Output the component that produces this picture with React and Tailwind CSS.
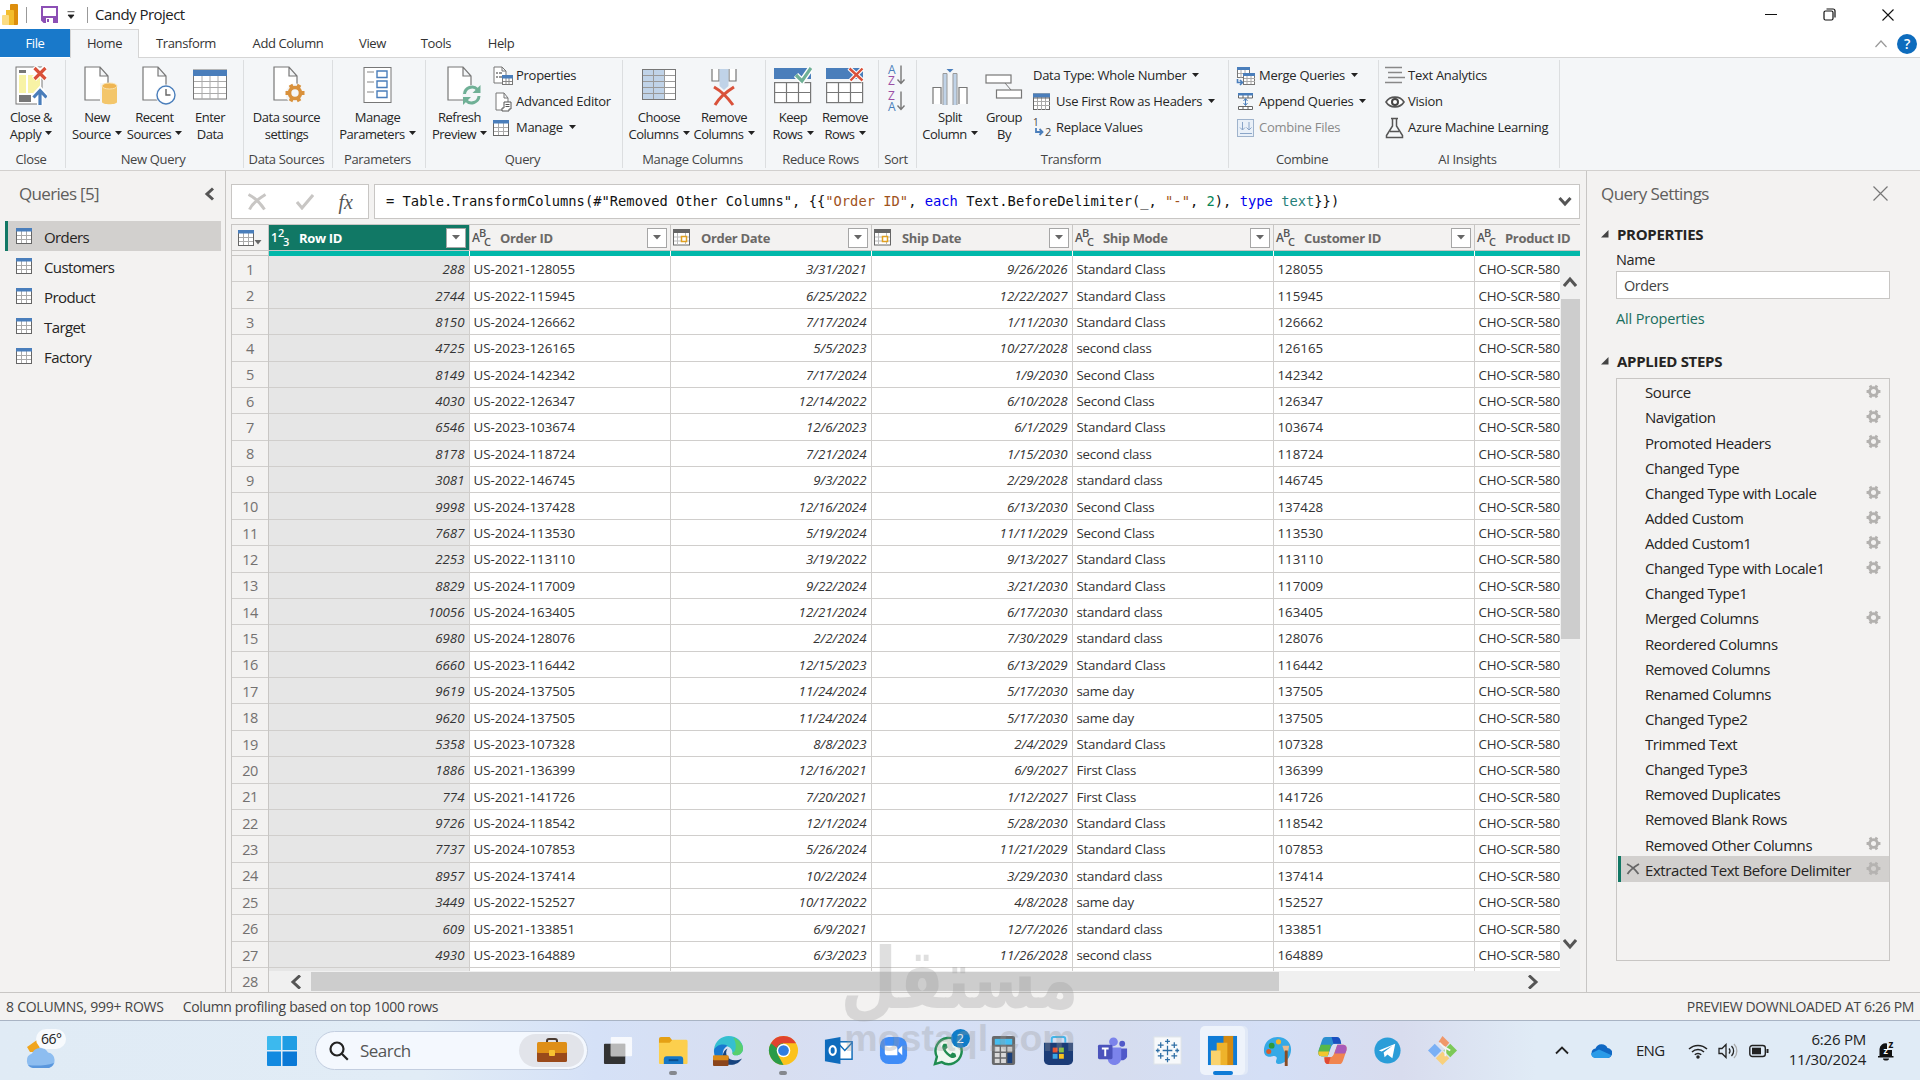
import React, { useState } from 'react';

const queries = ['Orders', 'Customers', 'Product', 'Target', 'Factory'];

const columns = [
  { key: 'rowId', label: 'Row ID', type: 'number', align: 'right' },
  { key: 'orderId', label: 'Order ID', type: 'text', align: 'left' },
  { key: 'orderDate', label: 'Order Date', type: 'date', align: 'right' },
  { key: 'shipDate', label: 'Ship Date', type: 'date', align: 'right' },
  { key: 'shipMode', label: 'Ship Mode', type: 'text', align: 'left' },
  { key: 'customerId', label: 'Customer ID', type: 'text', align: 'left' },
];

const rows = [
  ['288', 'US-2021-128055', '3/31/2021', '9/26/2026', 'Standard Class', '128055'],
  ['2744', 'US-2022-115945', '6/25/2022', '12/22/2027', 'Standard Class', '115945'],
  ['8150', 'US-2024-126662', '7/17/2024', '1/11/2030', 'Standard Class', '126662'],
  ['4725', 'US-2023-126165', '5/5/2023', '10/27/2028', 'second class', '126165'],
  ['8149', 'US-2024-142342', '7/17/2024', '1/9/2030', 'Second Class', '142342'],
  ['4030', 'US-2022-126347', '12/14/2022', '6/10/2028', 'Second Class', '126347'],
  ['6546', 'US-2023-103674', '12/6/2023', '6/1/2029', 'Standard Class', '103674'],
  ['8178', 'US-2024-118724', '7/21/2024', '1/15/2030', 'second class', '118724'],
  ['3081', 'US-2022-146745', '9/3/2022', '2/29/2028', 'standard class', '146745'],
  ['9998', 'US-2024-137428', '12/16/2024', '6/13/2030', 'Second Class', '137428'],
  ['7687', 'US-2024-113530', '5/19/2024', '11/11/2029', 'Second Class', '113530'],
  ['2253', 'US-2022-113110', '3/19/2022', '9/13/2027', 'Standard Class', '113110'],
  ['8829', 'US-2024-117009', '9/22/2024', '3/21/2030', 'Standard Class', '117009'],
  ['10056', 'US-2024-163405', '12/21/2024', '6/17/2030', 'standard class', '163405'],
  ['6980', 'US-2024-128076', '2/2/2024', '7/30/2029', 'standard class', '128076'],
  ['6660', 'US-2023-116442', '12/15/2023', '6/13/2029', 'Standard Class', '116442'],
  ['9619', 'US-2024-137505', '11/24/2024', '5/17/2030', 'same day', '137505'],
  ['9620', 'US-2024-137505', '11/24/2024', '5/17/2030', 'same day', '137505'],
  ['5358', 'US-2023-107328', '8/8/2023', '2/4/2029', 'Standard Class', '107328'],
  ['1886', 'US-2021-136399', '12/16/2021', '6/9/2027', 'First Class', '136399'],
  ['774', 'US-2021-141726', '7/20/2021', '1/12/2027', 'First Class', '141726'],
  ['9726', 'US-2024-118542', '12/1/2024', '5/28/2030', 'Standard Class', '118542'],
  ['7737', 'US-2024-107853', '5/26/2024', '11/21/2029', 'Standard Class', '107853'],
  ['8957', 'US-2024-137414', '10/2/2024', '3/29/2030', 'standard class', '137414'],
  ['3449', 'US-2022-152527', '10/17/2022', '4/8/2028', 'same day', '152527'],
  ['609', 'US-2021-133851', '6/9/2021', '12/7/2026', 'standard class', '133851'],
  ['4930', 'US-2023-164889', '6/3/2023', '11/26/2028', 'second class', '164889'],
];

const steps = [
  { name: 'Source', gear: true },
  { name: 'Navigation', gear: true },
  { name: 'Promoted Headers', gear: true },
  { name: 'Changed Type' },
  { name: 'Changed Type with Locale', gear: true },
  { name: 'Added Custom', gear: true },
  { name: 'Added Custom1', gear: true },
  { name: 'Changed Type with Locale1', gear: true },
  { name: 'Changed Type1' },
  { name: 'Merged Columns', gear: true },
  { name: 'Reordered Columns' },
  { name: 'Removed Columns' },
  { name: 'Renamed Columns' },
  { name: 'Changed Type2' },
  { name: 'Trimmed Text' },
  { name: 'Changed Type3' },
  { name: 'Removed Duplicates' },
  { name: 'Removed Blank Rows' },
  { name: 'Removed Other Columns', gear: true },
  { name: 'Extracted Text Before Delimiter', gear: true },
];

/* ---------- small shared drawings ---------- */

const Caret = ({ className = 'ml-1' }) => (
  <svg width="7" height="4" viewBox="0 0 7 4" className={`inline-block shrink-0 ${className}`}>
    <path d="M0 0h7L3.5 4z" fill="#222" />
  </svg>
);

const Chevron = ({ d, size = 14, color = '#555', width = 3 }) => (
  <svg width={size} height={size} viewBox="0 0 14 14" fill="none" stroke={color} strokeWidth={width}>
    <path d={d} />
  </svg>
);

const Gear = ({ color, size = 15 }) => (
  <svg width={size} height={size} viewBox="0 0 16 16">
    <circle cx="8" cy="8" r="4.2" fill="none" stroke={color} strokeWidth="3" />
    <g stroke={color} strokeWidth="3">
      <path d="M0.6 8h3M12.4 8h3M4.3 1.6l1.5 2.6M10.2 11.8l1.5 2.6M11.7 1.6l-1.5 2.6M5.8 11.8l-1.5 2.6" />
    </g>
  </svg>
);

const TableIcon = () => (
  <svg width="16" height="16" viewBox="0 0 16 16" className="shrink-0">
    <rect x="0.5" y="0.5" width="15" height="15" fill="#fff" stroke="#666" />
    <path d="M5.5 3v12M10.5 3v12M1 7.5h14M1 11.5h14" stroke="#aaa" fill="none" />
    <rect width="16" height="3.5" fill="#4a7ebb" />
  </svg>
);

const PagePath = () => (
  <path d="M1 1h15l8 9v24H1z M16 1v9h8" fill="#fff" stroke="#777" strokeWidth="1.2" />
);

/* ---------- ribbon icons ---------- */

const CloseApplyIcon = () => (
  <svg width="32" height="40" viewBox="0 0 32 40">
    <rect x="1" y="1" width="26" height="37" fill="#fff" stroke="#777" />
    <rect x="4" y="4" width="7" height="3" fill="#777" />
    <rect x="4" y="9" width="7" height="18" fill="#f8f3a5" />
    <rect x="13" y="9" width="12" height="18" fill="#f8f3a5" />
    <rect x="4" y="29" width="12" height="7" fill="#777" />
    <path d="M19 1l12 12M31 1L19 13" stroke="#fff" strokeWidth="6" />
    <path d="M19.500 2l11 11M30.500 2l-11 11" stroke="#d9513a" strokeWidth="3.200" />
    <path d="M25 39V24M18.500 31l6.500-7 6.500 7" stroke="#fff" strokeWidth="6" fill="none" />
    <path d="M25 39V25M18.500 31.500l6.500-7 6.500 7" stroke="#4a7ebb" strokeWidth="3.200" fill="none" />
  </svg>
);

const NewSourceIcon = () => (
  <svg width="34" height="40" viewBox="0 0 34 40" className="ml-[8px]">
    <PagePath />
    <path d="M16 17h17v21H16z" fill="#f4f6f8" />
    <path d="M18 20v16c0 3 15 3 15 0V20z" fill="#f3c66b" />
    <ellipse cx="25.500" cy="20" rx="7.500" ry="3" fill="#efb552" stroke="#f9e2ad" />
  </svg>
);

const RecentSourcesIcon = () => (
  <svg width="34" height="40" viewBox="0 0 34 40" className="ml-[8px]">
    <PagePath />
    <circle cx="24" cy="29" r="10.500" fill="#f4f6f8" />
    <circle cx="24" cy="29" r="9" fill="#fff" stroke="#4a7ebb" strokeWidth="1.400" />
    <path d="M24 23v6h4.500" stroke="#666" fill="none" strokeWidth="1.400" />
  </svg>
);

const EnterDataIcon = () => (
  <svg width="34" height="40" viewBox="0 0 34 40">
    <rect x="0.500" y="4" width="33" height="29" fill="#fff" stroke="#777" />
    <path d="M9 10v23M17 10v23M25 10v23M1 15.500h32M1 21.500h32M1 27.500h32" stroke="#aaa" />
    <rect y="4" width="34" height="6" fill="#4a7ebb" />
  </svg>
);

const DataSourceIcon = () => (
  <svg width="34" height="40" viewBox="0 0 34 40" className="ml-[7px]">
    <PagePath />
    <circle cx="23" cy="28" r="10.500" fill="#f4f6f8" />
    <g fill="none" stroke="#d9913c">
      <circle cx="22" cy="27" r="5.500" strokeWidth="3.600" />
      <path
        strokeWidth="4"
        d="M12.500 27h4M27.500 27h4M17.500 18.800l1.800 3.200M24.700 32l1.800 3.200M26.500 18.800l-1.800 3.200M19.300 32l-1.800 3.200"
      />
    </g>
  </svg>
);

const ParametersIcon = () => (
  <svg width="30" height="40" viewBox="0 0 30 40">
    <rect x="1" y="1.500" width="27" height="35" fill="#fff" stroke="#777" />
    <path d="M4 6h7M4 16h7M4 26h7" stroke="#888" strokeWidth="1.200" />
    <g fill="none" stroke="#4a7ebb" strokeWidth="1.400">
      <path d="M14 5h10v6.500H14zM14 15h10v6.500H14zM14 25h10v6.500H14z" />
    </g>
  </svg>
);

const RefreshIcon = () => (
  <svg width="34" height="40" viewBox="0 0 34 40" className="ml-[8px]">
    <PagePath />
    <circle cx="25" cy="29" r="10" fill="#f4f6f8" />
    <g fill="none" stroke="#6fb096" strokeWidth="3">
      <path d="M17.500 28a7.500 7.500 0 0 1 13-4.500M32 30a7.500 7.500 0 0 1-13 4.500" />
    </g>
    <path d="M33.500 19v8h-8zM16 39v-8h8z" fill="#6fb096" />
  </svg>
);

const ChooseColumnsIcon = () => (
  <svg width="34" height="40" viewBox="0 0 34 40">
    <rect x="0.500" y="3.500" width="33" height="30" fill="#fff" stroke="#777" />
    <rect x="1" y="4" width="21" height="29" fill="#c0d3e8" />
    <path d="M11.500 4v29M22.500 4v29M1 9.500h32M1 15.500h32M1 21.500h32M1 27.500h32" stroke="#999" />
  </svg>
);

const RemoveColumnsIcon = () => (
  <svg width="30" height="40" viewBox="0 0 30 40">
    <path d="M3 3v12h7V3M20 3v12h7V3" fill="#fff" stroke="#777" strokeWidth="1.200" />
    <path d="M10.500 3h9v17l-4.500 4-4.500-4z" fill="#c0d3e8" />
    <path d="M5 21c7 4 14 11 19 18M25 21C17 26 10 32 6 39" stroke="#d9513a" strokeWidth="3" fill="none" />
  </svg>
);

const RowsIcon = ({ remove }) => (
  <svg width="38" height="40" viewBox="0 0 38 40">
    <rect x="0" y="2" width="37" height="11" fill="#4a7ebb" />
    <rect x="0.600" y="16.600" width="36" height="20" fill="#fff" stroke="#777" strokeWidth="1.200" />
    <path d="M12.500 17v20M24.500 17v20M1 26.500h36" stroke="#777" strokeWidth="1.200" />
    {remove ? (
      <>
        <path d="M23 2l14 13M37 2L24 15" stroke="#fff" strokeWidth="4.500" />
        <path d="M23.500 2.500l13 12M36.500 2.500l-12 12" stroke="#d9513a" strokeWidth="2.400" />
      </>
    ) : (
      <>
        <path d="M22 9l6 6 9-13" stroke="#fff" strokeWidth="6" fill="none" />
        <path d="M22 9l6 6 9-13" stroke="#6fb096" strokeWidth="3.200" fill="none" />
      </>
    )}
  </svg>
);

const SortIcon = ({ top, bottom, topColor, bottomColor }) => (
  <svg width="18" height="20" viewBox="0 0 18 20" className="overflow-visible font-['Open_Sans',sans-serif]">
    <text x="1" y="9" fontSize="12" fontWeight="500" fill={topColor}>{top}</text>
    <text x="1" y="20" fontSize="12" fontWeight="500" fill={bottomColor}>{bottom}</text>
    <path d="M14 0.500v17.500M10.500 14.500l3.500 4 3.500-4" stroke="#777" strokeWidth="1.400" fill="none" />
  </svg>
);

const SplitIcon = () => (
  <svg width="36" height="40" viewBox="0 0 36 40">
    <path d="M1 38V21.500h8V38M27 38V21.500h8V38" fill="#fff" stroke="#777" strokeWidth="1.200" />
    <path d="M11 39V7.500h4V39M21 39V7.500h4V39" fill="#c0d3e8" stroke="#999" />
    <path d="M14.500 3h7L18 6.500z" fill="#4a7ebb" />
  </svg>
);

const GroupByIcon = () => (
  <svg width="38" height="40" viewBox="0 0 38 40">
    <rect x="1" y="9" width="25" height="8" fill="#fff" stroke="#777" strokeWidth="1.200" />
    <rect x="11.500" y="24" width="25" height="8" fill="#fff" stroke="#777" strokeWidth="1.200" />
    <path d="M20 17l6 7" stroke="#777" />
  </svg>
);

const PropertiesIcon = () => (
  <svg width="20" height="20" viewBox="0 0 20 20">
    <path d="M1 1h8l4 4v12H1z M9 1v4h4" fill="#fff" stroke="#777" />
    <path d="M3 7h2M3 11h2M6 7h3M6 11h3" stroke="#777" strokeWidth="1.500" />
    <rect x="9.500" y="10.500" width="10" height="8" fill="#fff" stroke="#777" />
    <path d="M13 12v6M16 12v6M10 15.500h9" stroke="#888" />
    <rect x="9" y="9" width="11" height="3.500" fill="#4a7ebb" />
  </svg>
);

const EditorIcon = () => (
  <svg width="20" height="20" viewBox="0 0 20 20">
    <path d="M3 1h8l4 5v12H3z M11 1v5h4" fill="#fff" stroke="#777" />
    <path d="M11 10h7v7h-2v2H9v-3h2z" fill="#fff" stroke="#555" />
    <path d="M12.500 12.500h4M12.500 14.500h4" stroke="#555" />
  </svg>
);

const HeadersIcon = () => (
  <svg width="18" height="18" viewBox="0 0 18 18">
    <rect x="0.500" y="1" width="16" height="15.500" fill="#fff" stroke="#666" />
    <path d="M4.500 2v15M8.500 2v15M12.500 2v15M1 8.500h16M1 12.500h16" stroke="#aaa" />
    <rect x="0" y="0.500" width="17" height="4" fill="#4a7ebb" />
    <path d="M1 5h15.500" stroke="#666" />
  </svg>
);

const ReplaceIcon = () => (
  <svg width="20" height="20" viewBox="0 0 20 20" className="overflow-visible font-['Open_Sans',sans-serif]">
    <text x="0" y="8" fontSize="10" fill="#444">1</text>
    <text x="12" y="18" fontSize="11" fill="#444">2</text>
    <path d="M3 10v4h6M6.500 11l3 3-3 3" stroke="#4a7ebb" strokeWidth="1.800" fill="none" />
  </svg>
);

const MergeIcon = () => (
  <svg width="20" height="20" viewBox="0 0 20 20">
    <rect x="1.500" y="1.500" width="12" height="10" fill="#fff" stroke="#777" />
    <path d="M5 4v8M9 4v8M2 7.500h11" stroke="#aaa" />
    <rect x="1" y="1" width="13" height="3" fill="#4a7ebb" />
    <rect x="7.500" y="7.500" width="11" height="11" fill="#fff" stroke="#777" />
    <path d="M11 10v8M15 10v8M8 12.500h11M8 15.500h11" stroke="#aaa" />
    <rect x="7" y="7" width="12" height="3" fill="#4a7ebb" />
    <path d="M1.500 13v3.500h5M4 14l2.500 2.500L4 19" stroke="#4a7ebb" strokeWidth="1.600" fill="none" />
  </svg>
);

const AppendIcon = () => (
  <svg width="20" height="20" viewBox="0 0 20 20">
    <path d="M2.500 2h14v4h-14zM2.500 14.500h14v3h-14zM7 3v3M12 3v3M7 15v3M12 15v3" fill="#fff" stroke="#666" />
    <rect x="2" y="1" width="15" height="2.500" fill="#4a7ebb" />
    <path d="M9.500 7v6M7.500 9l2-2.500 2 2.500M7.500 11l2 2.500 2-2.500" stroke="#4a7ebb" fill="none" />
  </svg>
);

const CombineIcon = () => (
  <svg width="20" height="20" viewBox="0 0 20 20">
    <rect x="1.500" y="1.500" width="16" height="17" fill="#e9f0f8" stroke="#9fb3cc" />
    <path d="M6.500 4v8M4 9.500L6.500 12 9 9.500M13 4v8M10.500 9.500L13 12l2.500-2.500M4 15.500h12" stroke="#8aa5c8" fill="none" />
  </svg>
);

const TextAnalyticsIcon = () => (
  <svg width="20" height="20" viewBox="0 0 20 20">
    <path d="M0 1.500h17M3 6.500h14M3 11.500h17M0 16.500h17" stroke="#888" strokeWidth="1.500" />
  </svg>
);

const VisionIcon = () => (
  <svg width="20" height="14" viewBox="0 0 20 14">
    <path d="M1 7c4-6.500 14-6.500 18 0-4 6.500-14 6.500-18 0z" fill="#fff" stroke="#555" strokeWidth="1.600" />
    <circle cx="10" cy="7" r="3" fill="none" stroke="#444" strokeWidth="2" />
  </svg>
);

const FlaskIcon = () => (
  <svg width="20" height="22" viewBox="0 0 20 22">
    <path d="M6 1.500h7M7.500 1.500V9L1.500 18.500V20.500h16V18.500L11.500 9V1.500M5 14.500h9" fill="none" stroke="#555" strokeWidth="1.500" />
  </svg>
);

/* ---------- ribbon ---------- */

const BigButton = ({ icon, lines, caret, width }) => (
  <div className={`flex shrink-0 flex-col items-center pt-[6px] text-center ${width}`}>
    <div className="flex h-[44px] items-start">{icon}</div>
    <div className="-mt-px whitespace-nowrap leading-[17px] tracking-[-0.038em]">
      <div>{lines[0]}</div>
      <div className="flex items-center justify-center">
        {lines[1]}
        {caret && <Caret className="ml-[4px] -mt-[3px]" />}
      </div>
    </div>
  </div>
);

const SmallButton = ({ icon, label, caret, disabled }) => (
  <div className={`flex h-[26px] items-center whitespace-nowrap tracking-[-0.021em] ${disabled ? 'text-[#8a8a8a]' : ''}`}>
    {icon && <span className="mr-[3px] flex w-5 shrink-0 justify-start">{icon}</span>}
    {label}
    {caret && <Caret className="ml-[6px] -mt-[3px]" />}
  </div>
);

const Group = ({ label, width, children, className = '' }) => (
  <div className={`my-[2px] flex shrink-0 flex-col border-r border-[#dcdee0] pr-[3px] ${width}`}>
    <div className={`flex h-[91px] ${className}`}>{children}</div>
    <div className="whitespace-nowrap text-center leading-[17px] text-[#444]">{label}</div>
  </div>
);

const Ribbon = () => (
  <div className="flex h-[113px] border-b border-[#d2d0ce] bg-[#f4f6f8] text-[13px] tracking-[-0.026em] text-[#262626]">
    <Group label="Close" width="w-[66px]" className="justify-center">
      <BigButton icon={<CloseApplyIcon />} lines={['Close &', 'Apply']} caret width="w-[62px]" />
    </Group>
    <Group label="New Query" width="w-[178px]" className="pl-[2px]">
      <BigButton icon={<NewSourceIcon />} lines={['New', 'Source']} caret width="w-[58px]" />
      <BigButton icon={<RecentSourcesIcon />} lines={['Recent', 'Sources']} caret width="w-[57px]" />
      <BigButton icon={<EnterDataIcon />} lines={['Enter', 'Data']} width="w-[54px]" />
    </Group>
    <Group label="Data Sources" width="w-[89px]" className="justify-center">
      <BigButton icon={<DataSourceIcon />} lines={['Data source', 'settings']} width="w-[84px]" />
    </Group>
    <Group label="Parameters" width="w-[93px]" className="justify-center">
      <BigButton icon={<ParametersIcon />} lines={['Manage', 'Parameters']} caret width="w-[88px]" />
    </Group>
    <Group label="Query" width="w-[197px]">
      <BigButton icon={<RefreshIcon />} lines={['Refresh', 'Preview']} caret width="w-[67px]" />
      <div className="pt-[3px]">
        <SmallButton icon={<PropertiesIcon />} label="Properties" />
        <SmallButton icon={<EditorIcon />} label="Advanced Editor" />
        <SmallButton icon={<TableIcon />} label="Manage" caret />
      </div>
    </Group>
    <Group label="Manage Columns" width="w-[143px]" className="pl-[4px]">
      <BigButton icon={<ChooseColumnsIcon />} lines={['Choose', 'Columns']} caret width="w-[64px]" />
      <BigButton icon={<RemoveColumnsIcon />} lines={['Remove', 'Columns']} caret width="w-[66px]" />
    </Group>
    <Group label="Reduce Rows" width="w-[113px]" className="pl-[1px]">
      <BigButton icon={<RowsIcon />} lines={['Keep', 'Rows']} caret width="w-[52px]" />
      <BigButton icon={<RowsIcon remove />} lines={['Remove', 'Rows']} caret width="w-[52px]" />
    </Group>
    <Group label="Sort" width="w-[38px]" className="flex-col items-center gap-[6px] pt-[5px]">
      <SortIcon top="A" bottom="Z" topColor="#4a7ebb" bottomColor="#9b4fa5" />
      <SortIcon top="Z" bottom="A" topColor="#9b4fa5" bottomColor="#4a7ebb" />
    </Group>
    <Group label="Transform" width="w-[312px]">
      <BigButton icon={<SplitIcon />} lines={['Split', 'Column']} caret width="w-[66px]" />
      <BigButton icon={<GroupByIcon />} lines={['Group', 'By']} width="w-[42px]" />
      <div className="pl-[8px] pt-[3px]">
        <SmallButton label="Data Type: Whole Number" caret />
        <SmallButton icon={<HeadersIcon />} label="Use First Row as Headers" caret />
        <SmallButton icon={<ReplaceIcon />} label="Replace Values" />
      </div>
    </Group>
    <Group label="Combine" width="w-[150px]" className="pl-[7px] pt-[3px]">
      <div>
        <SmallButton icon={<MergeIcon />} label="Merge Queries" caret />
        <SmallButton icon={<AppendIcon />} label="Append Queries" caret />
        <SmallButton icon={<CombineIcon />} label="Combine Files" disabled />
      </div>
    </Group>
    <Group label="AI Insights" width="w-[181px]" className="pl-[6px] pt-[3px]">
      <div>
        <SmallButton icon={<TextAnalyticsIcon />} label="Text Analytics" />
        <SmallButton icon={<VisionIcon />} label="Vision" />
        <SmallButton icon={<FlaskIcon />} label="Azure Machine Learning" />
      </div>
    </Group>
  </div>
);

/* ---------- window chrome ---------- */

const PowerBiLogo = () => (
  <svg width="16" height="21" viewBox="0 0 16 21">
    <rect x="8" y="0" width="8" height="21" rx="1" fill="#dd8e0c" />
    <path d="M4 6h7a1 1 0 0 1 1 1v14H4z" fill="#f3bd2d" />
    <path d="M0 12a1 1 0 0 1 1-1h5a1 1 0 0 1 1 1v9H1a1 1 0 0 1-1-1z" fill="#fbdc82" />
  </svg>
);

const TitleBar = () => (
  <div className="flex h-[29px] items-center justify-between bg-white">
    <div className="flex items-center pl-[2px]">
      <PowerBiLogo />
      <div className="ml-[8px] h-[16px] w-px bg-[#999]" />
      <svg width="17" height="17" viewBox="0 0 17 17" className="ml-[14px]">
        <path d="M1 1h15v15H3l-2-2z" fill="#fff" stroke="#8c4fb5" strokeWidth="2" />
        <path d="M1 10h15v6H3l-2-2z" fill="#8c4fb5" />
        <rect x="5" y="12" width="7" height="5" fill="#fff" />
        <rect x="6" y="13" width="2" height="3" fill="#8c4fb5" />
      </svg>
      <svg width="8" height="8" viewBox="0 0 8 8" className="ml-[9px]">
        <path d="M0.500 0.700h7M1 4h6L4 7.500z" fill="#222" stroke="#222" strokeWidth="0.800" />
      </svg>
      <div className="ml-[12px] h-[16px] w-px bg-[#999]" />
      <span className="-mt-px ml-[7px] text-[15px] leading-[20px] tracking-[-0.035em] text-[#222]">Candy Project</span>
    </div>
    <div className="flex items-center gap-[46px] pr-[26px]">
      <svg width="12" height="12" viewBox="0 0 12 12"><path d="M0 5.500h12" stroke="#111" /></svg>
      <svg width="13" height="13" viewBox="0 0 13 13" fill="none" stroke="#111" strokeWidth="1.200">
        <rect x="1" y="3" width="9" height="9" rx="1.500" />
        <path d="M3.500 1h6.500a2 2 0 0 1 2 2v6.500" />
      </svg>
      <svg width="12" height="12" viewBox="0 0 12 12"><path d="M0.500 0.500l11 11M11.500 0.500l-11 11" stroke="#111" strokeWidth="1.100" /></svg>
    </div>
  </div>
);

const Tabs = () => {
  const tabs = [
    ['Transform', 'w-[94px]'],
    ['Add Column', 'w-[110px]'],
    ['View', 'w-[59px]'],
    ['Tools', 'w-[68px]'],
    ['Help', 'w-[62px]'],
  ];
  return (
    <div className="flex h-[29px] bg-white text-[13px] tracking-[-0.03em] text-[#333]">
      <div className="flex h-[28px] w-[70px] items-center justify-center bg-[#1979ca] pt-px text-white">File</div>
      <div className="flex w-[69px] items-center justify-center border-x border-t border-[#d5d5d5] bg-[#f4f6f8]">Home</div>
      <div className="flex flex-1 items-center border-b border-[#d5d5d5] pt-[2px]">
        {tabs.map(([name, width]) => (
          <div key={name} className={`text-center ${width}`}>{name}</div>
        ))}
        <div className="ml-auto flex items-center pr-[3px]">
          <svg width="12" height="8" viewBox="0 0 12 8" className="mr-[10px]">
            <path d="M0.500 7L6 1l5.500 6" fill="none" stroke="#999" strokeWidth="1.200" />
          </svg>
          <div className="-mt-px flex h-[20px] w-[20px] items-center justify-center rounded-full bg-[#0e6cbd] text-[14px] font-semibold text-white">?</div>
        </div>
      </div>
    </div>
  );
};

/* ---------- left pane ---------- */

const QueriesPane = ({ selected, onSelect }) => (
  <div className="flex w-[226px] shrink-0 flex-col border-r border-[#c8c6c4]">
    <div className="flex h-[45px] items-center justify-between pl-[19px] pr-[8px]">
      <span className="text-[17px] tracking-[-0.04em] text-[#605e5c]">Queries [5]</span>
      <Chevron d="M10 1.500L4 7l6 5.500" />
    </div>
    <div className="mt-[5px]">
      {queries.map((name) => (
        <div
          key={name}
          onClick={() => onSelect(name)}
          className={`ml-[5px] mr-[4px] flex h-[30px] items-center border-l-[3px] pl-[8px] text-[15px] tracking-[-0.04em] text-[#252423] ${
            selected === name ? 'border-[#117865] bg-[#d2d0ce]' : 'border-transparent'
          }`}
        >
          <TableIcon />
          <span className="ml-[12px] mt-[2px]">{name}</span>
        </div>
      ))}
    </div>
  </div>
);

/* ---------- grid ---------- */

const TypeIcon = ({ type, active }) => {
  const color = active ? '#fff' : '#555';
  if (type === 'date') {
    return (
      <svg width="18" height="17" viewBox="0 0 18 17" className="shrink-0">
        <rect x="0.500" y="0.500" width="16" height="15.500" fill="#fff" stroke="#666" />
        <path d="M4.500 4v12M12.500 4v12M1 8h15M1 12h15" stroke="#bbb" />
        <rect x="0" y="0" width="17" height="4" fill="#666" />
        <rect x="8.500" y="7.500" width="5" height="5" fill="#fff" stroke="#e0a020" strokeWidth="1.500" />
      </svg>
    );
  }
  const [a, b, c] = type === 'number' ? ['1', '2', '3'] : ['A', 'B', 'C'];
  return (
    <svg width="20" height="20" viewBox="0 0 20 20" fill={color} className="shrink-0 overflow-visible font-['Open_Sans',sans-serif]">
      <text x="0" y="14" fontSize="12" fontWeight="600">{a}</text>
      <text x="7" y="9" fontSize="11" fontWeight="600">{b}</text>
      <text x="12" y="18" fontSize="11" fontWeight="600">{c}</text>
    </svg>
  );
};

const HeaderCell = ({ col, active }) => (
  <div
    className={`flex h-[25px] w-[201px] shrink-0 items-center border-r border-[#c8c6c4] pl-[2px] ${
      active ? 'bg-[#117865] text-white' : 'bg-[#f3f2f1] text-[#6b6967]'
    }`}
  >
    <div className="w-[28px] shrink-0"><TypeIcon type={col.type} active={active} /></div>
    <span className="mt-[2px] whitespace-nowrap font-bold tracking-[-0.025em]">{col.label}</span>
    <div className="ml-auto mr-[3px] flex h-[20px] w-[20px] items-center justify-center border border-[#a6a6a6] bg-white">
      <svg width="8" height="5" viewBox="0 0 8 5"><path d="M0 0h8L4 4.500z" fill="#666" /></svg>
    </div>
  </div>
);

const FormulaBar = () => (
  <div className="flex h-[35px] gap-[5px]">
    <div className="flex w-[138px] items-center justify-between border border-[#c8c6c4] bg-white pl-[15px] pr-[15px]">
      <svg width="20" height="18" viewBox="0 0 20 18">
        <path d="M1.500 1.500c6 3 12 9 16 15M18.500 1.500C11 6 5 11 2.500 16.500" stroke="#c8c6c4" strokeWidth="3" fill="none" />
      </svg>
      <svg width="18" height="16" viewBox="0 0 18 16" className="ml-[4px]">
        <path d="M1 8l5 6L17 1" stroke="#c8c6c4" strokeWidth="3" fill="none" />
      </svg>
      <span className="font-['Liberation_Serif',serif] text-[20px] italic leading-none text-[#555]">fx</span>
    </div>
    <div className="flex flex-1 items-center justify-between border border-[#c8c6c4] bg-white pl-[11px] pr-[7px]">
      <code className="whitespace-pre font-['DejaVu_Sans_Mono',monospace] text-[13.77px] text-[#111]">
        {'= Table.TransformColumns(#"Removed Other Columns", {{'}
        <span className="text-[#a0521c]">"Order ID"</span>
        {', '}
        <span className="text-[#0000ee]">each</span>
        {' Text.BeforeDelimiter(_, '}
        <span className="text-[#a0521c]">"-"</span>
        {', '}
        <span className="text-[#098658]">2</span>
        {'), '}
        <span className="text-[#0000ee]">type</span> <span className="text-[#267f79]">text</span>
        {'}})'}
      </code>
      <Chevron d="M1.500 3L7 9l5.500-6" />
    </div>
  </div>
);

const Grid = () => (
  <div className="mt-[5px] flex min-h-0 flex-1 flex-col border-l border-t border-[#c8c6c4] text-[13px]">
    {/* Column headers */}
    <div className="flex h-[25px] shrink-0 overflow-hidden">
      <div className="flex w-[37px] shrink-0 items-center border-r border-[#c8c6c4] pl-[6px]">
        <TableIcon />
        <svg width="8" height="5" viewBox="0 0 8 5" className="mt-[9px]"><path d="M0.500 0h7L4 4.500z" fill="#666" /></svg>
      </div>
      {columns.map((col, i) => (
        <HeaderCell key={col.key} col={col} active={i === 0} />
      ))}
      <HeaderCell col={{ label: 'Product ID', type: 'text' }} />
    </div>
    {/* Column quality bar */}
    <div className="flex h-[6px] shrink-0 overflow-hidden border-t border-[#c8c6c4]">
      <div className="w-[37px] shrink-0 border-b border-r border-[#c8c6c4]" />
      {[0, 1, 2, 3, 4, 5, 6].map((i) => (
        <div key={i} className="w-[201px] shrink-0 border-r border-white bg-[#01b8aa]" />
      ))}
    </div>
    <div className="flex min-h-0 flex-1">
      {/* Row numbers */}
      <div className="w-[37px] shrink-0 overflow-hidden border-r border-[#c8c6c4] text-[14.5px] tracking-[-0.03em] text-[#737170]">
        {[...rows, null].map((_, i) => (
          <div key={i} className="flex h-[26.385px] items-center justify-center border-b border-[#d0cecc] pt-[2px]">
            {i + 1}
          </div>
        ))}
      </div>
      <div className="flex min-w-0 flex-1 flex-col">
        <div className="flex min-h-0 flex-1">
          <div className="min-w-0 flex-1 overflow-hidden bg-white text-[13.3px] text-[#333]">
            {[...rows, ['', '', '', '', '', '', '']].map((row, i) => (
              <div key={i} className="flex h-[26.385px]">
                {columns.map((col, c) => (
                  <div
                    key={col.key}
                    className={`flex w-[201px] shrink-0 items-center whitespace-nowrap border-b border-r border-[#d0cecc] pl-[3.5px] pr-[4.5px] pt-[3px] ${
                      col.align === 'right' ? 'justify-end italic' : ''
                    } ${col.key === 'shipMode' ? 'tracking-[-0.017em]' : ''} ${c === 0 ? 'bg-[#e6e6e6]' : ''}`}
                  >
                    {row[c]}
                  </div>
                ))}
                <div className="flex w-[201px] shrink-0 items-center whitespace-nowrap border-b border-[#d0cecc] pl-[3.5px] pt-[3px] tracking-[-0.017em]">
                  {i < rows.length ? 'CHO-SCR-58000' : ''}
                </div>
              </div>
            ))}
          </div>
          {/* Vertical scrollbar */}
          <div className="flex w-[20px] shrink-0 flex-col items-center bg-[#f0f0f0] pt-[20px]">
            <Chevron d="M1 10l6-7 6 7" />
            <div className="mt-[9px] h-[340px] w-[19px] bg-[#cdcdcd]" />
            <div className="mt-auto mb-[21px]"><Chevron d="M1 4l6 7 6-7" /></div>
          </div>
        </div>
        {/* Horizontal scrollbar */}
        <div className="flex h-[21px] items-center bg-[#f0f0f0] pl-[20px] pr-[40px]">
          <Chevron d="M11 0.500L4 7l7 6.500" />
          <div className="ml-[8px] h-[19px] w-[968px] bg-[#cdcdcd]" />
          <div className="ml-auto"><Chevron d="M3 0.500L10 7l-7 6.500" /></div>
        </div>
      </div>
    </div>
  </div>
);

/* ---------- right pane ---------- */

const SectionTitle = ({ children }) => (
  <div className="flex items-center">
    <svg width="8" height="8" viewBox="0 0 8 8"><path d="M7.500 0v7.500H0z" fill="#444" /></svg>
    <span className="ml-[8px] text-[15px] font-bold leading-[20px] tracking-[-0.02em] text-[#252423]">{children}</span>
  </div>
);

const SettingsPane = ({ name }) => (
  <div className="flex w-[334px] shrink-0 flex-col border-l border-[#c8c6c4] pl-[14px] text-[15px] tracking-[-0.028em] text-[#252423]">
    <div className="flex h-[45px] items-center justify-between pr-[32px]">
      <span className="text-[17px] tracking-[-0.035em] text-[#605e5c]">Query Settings</span>
      <svg width="15" height="15" viewBox="0 0 15 15"><path d="M0.500 0.500l14 14M14.500 0.500l-14 14" stroke="#777" strokeWidth="1.200" /></svg>
    </div>
    <div className="mt-[8px]"><SectionTitle>PROPERTIES</SectionTitle></div>
    <div className="ml-[15px] mt-[6px] text-[14.5px] leading-[20px]">Name</div>
    <div className="ml-[15px] mr-[30px] mt-[1px] flex h-[28px] items-center border border-[#c8c6c4] bg-white px-[7px] pt-[2px] text-[14.5px] text-[#444]">{name}</div>
    <div className="ml-[15px] mt-[10px] text-[14.5px] leading-[20px] tracking-[-0.01em] text-[#1a6e5e]">All Properties</div>
    <div className="mt-[22px]"><SectionTitle>APPLIED STEPS</SectionTitle></div>
    <div className="ml-[15px] mr-[30px] mt-[7px] h-[583px] border border-[#c8c6c4]">
      {steps.map((step, i) => {
        const current = i === steps.length - 1;
        return (
          <div
            key={step.name}
            className={`ml-[1px] flex h-[25.14px] items-center border-l-[3px] pr-[8px] ${
              current ? 'border-[#117865] bg-[#d2d0ce]' : 'border-transparent'
            }`}
          >
            <div className="w-[24px] pl-[5px]">
              {current && (
                <svg width="14" height="12" viewBox="0 0 14 12"><path d="M1 1c4 2 8 5 11.500 10M13 1C8 4 4 7 1.500 11" stroke="#666" strokeWidth="1.800" fill="none" /></svg>
              )}
            </div>
            <span className="mt-[2px] whitespace-nowrap">{step.name}</span>
            <div className="ml-auto">{step.gear && <Gear color={current ? '#b5b3b1' : '#b3b1af'} />}</div>
          </div>
        );
      })}
    </div>
  </div>
);

/* ---------- taskbar ---------- */

const taskIcons = [
  {
    id: 'taskview',
    art: (
      <>
        <rect x="1" y="9" width="22" height="21" rx="1" fill="#333" />
        <rect x="8" y="2" width="22" height="20" rx="1" fill="#fff" opacity="0.800" />
        <rect x="8" y="9" width="15" height="13" fill="#b9b9b9" />
      </>
    ),
  },
  {
    id: 'explorer',
    running: true,
    art: (
      <>
        <path d="M1 4a2 2 0 0 1 2-2h9l3 4h13a2 2 0 0 1 2 2v5H1z" fill="#e5a014" />
        <path d="M1 8h11l3-3h14a1.500 1.500 0 0 1 1.500 1.500V29a1 1 0 0 1-1 1H2a1 1 0 0 1-1-1z" fill="#fccf4d" />
        <path d="M6 30v-5a3 3 0 0 1 3-3h14a3 3 0 0 1 3 3v5z" fill="#1677c7" />
        <path d="M11 26h10" stroke="#0a4d8c" strokeWidth="2" />
      </>
    ),
  },
  {
    id: 'edge',
    art: (
      <>
        <path d="M1 15C2 6 9 1 16 1c9 0 15 6 15 13 0 4-3 7-7 7-3 0-4-1-4-3 0-5-6-8-11-6-4 1-7 3-8 6z" fill="#35bfd0" />
        <path d="M21 2.500c6 2 10 7 10 11.500 0 4-3 7-7 7-3 0-4-1-4-3 4 0 5-9 1-15.500z" fill="#58cf6e" />
        <path d="M1 17c0-6 9-9 14-6-5 3-6 8-4 13 2 4 6 6 10 6C11 33 1 27 1 17z" fill="#1878cf" />
        <path d="M15 14c-4 6 1 13 9 12 3 0 5-1 6-2-3 6-10 8-16 6-6-4-5-13 1-16z" fill="#16437e" />
        <rect x="0" y="22" width="16" height="10" rx="1" fill="#8b451b" />
        <rect x="0" y="21" width="16" height="5" rx="1" fill="#dc8b18" />
      </>
    ),
  },
  {
    id: 'chrome',
    running: true,
    art: (
      <>
        <circle cx="16" cy="16" r="15" fill="#fbc21c" />
        <path d="M3 8.500L16 8.500 10 20l6 11A15 15 0 0 1 3 8.500z" fill="#2a9b48" />
        <path d="M3 8.500A15 15 0 0 1 29 8.500H16a7.500 7.500 0 0 0-7 5z" fill="#e0432f" />
        <circle cx="16" cy="16" r="7" fill="#fff" />
        <circle cx="16" cy="16" r="5.500" fill="#2f7de1" />
      </>
    ),
  },
  {
    id: 'outlook',
    art: (
      <>
        <rect x="15" y="7" width="15" height="18" fill="#fff" stroke="#0d6ab8" strokeWidth="1.500" />
        <path d="M16 9l6.500 7L30 8" fill="none" stroke="#0d6ab8" strokeWidth="1.500" />
        <path d="M2 5l16-3v28L2 27z" fill="#0f6cbd" />
        <ellipse cx="10" cy="16" rx="3.200" ry="4.500" fill="none" stroke="#fff" strokeWidth="2.200" />
      </>
    ),
  },
  {
    id: 'zoom',
    art: (
      <>
        <rect x="2" y="2" width="28" height="28" rx="9" fill="#3f8cf7" />
        <path d="M7 11h10a3 3 0 0 1 3 3v7H10a3 3 0 0 1-3-3zM21 15l4-4v10l-4-4z" fill="#fff" />
      </>
    ),
  },
  {
    id: 'whatsapp',
    badge: '2',
    art: (
      <>
        <path d="M2 30l2-7.500A13.500 13.500 0 1 1 9 28z" fill="#eef7f0" stroke="#1f8c50" strokeWidth="2.500" />
        <path d="M11 9c-3 3-1 7 3 11s8 5 10 2l-1-3-3-1-2 2c-2-1-4-3-5-5l2-2-1-4z" fill="#1f8c50" />
      </>
    ),
  },
  {
    id: 'calculator',
    art: (
      <>
        <rect x="4" y="1" width="24" height="30" rx="2" fill="#68696b" />
        <rect x="7" y="4" width="18" height="6" fill="#45bdf0" />
        <path d="M7 12h5v5H7zM13.500 12h5v5h-5zM20 12h5v5h-5zM7 18.500h5v4.500H7zM13.500 18.500h5v4.500h-5zM7 24.500h5V29H7zM13.500 24.500h5V29h-5z" fill="#d9d9d9" />
        <rect x="20" y="18.500" width="5" height="10.500" fill="#1c3f78" />
      </>
    ),
  },
  {
    id: 'store',
    art: (
      <>
        <path d="M9 8V4a2 2 0 0 1 2-2h10a2 2 0 0 1 2 2v4" fill="none" stroke="#41b5ea" strokeWidth="2" />
        <path d="M1 8h30v18a5 5 0 0 1-5 5H6a5 5 0 0 1-5-5z" fill="#1c3c77" />
        <rect x="10" y="13" width="5" height="5" fill="#e8532e" />
        <rect x="16.500" y="13" width="5" height="5" fill="#8bc53f" />
        <rect x="10" y="19.500" width="5" height="5" fill="#39a5e6" />
        <rect x="16.500" y="19.500" width="5" height="5" fill="#fbc31d" />
      </>
    ),
  },
  {
    id: 'teams',
    art: (
      <>
        <circle cx="17" cy="7" r="4.500" fill="#7b83eb" />
        <circle cx="26" cy="9" r="3" fill="#5059c9" />
        <path d="M21 14h10v8a5 5 0 0 1-8 3z" fill="#5059c9" />
        <path d="M9 13h16v10a7 7 0 0 1-14 2z" fill="#7b83eb" />
        <rect x="1" y="10" width="15" height="15" rx="1.500" fill="#4b53bc" />
        <path d="M5 14h7M8.500 14v8" stroke="#fff" strokeWidth="2" />
      </>
    ),
  },
  {
    id: 'tableau',
    art: (
      <>
        <rect x="2" y="2" width="28" height="28" fill="#f7f9fb" stroke="#dfe3e8" />
        <path
          d="M16 11v10M11 16h10M16 4v5M13.500 6.500h5M16 23v5M13.500 25.500h5M9 7.500v6M6 10.500h6M23 7.500v6M20 10.500h6M9 18.500v6M6 21.500h6M23 18.500v6M20 21.500h6M6 14v4M4 16h4M26 14v4M24 16h4"
          stroke="#2e6ea5"
          strokeWidth="1.300"
        />
      </>
    ),
  },
  {
    id: 'powerbi',
    active: true,
    art: (
      <>
        <rect x="1" y="1" width="30" height="30" fill="#0f7bd6" />
        <rect x="17" y="1" width="10" height="30" fill="#d48a10" />
        <rect x="10" y="8" width="11" height="23" fill="#eeb32b" />
        <rect x="4" y="16" width="10" height="15" fill="#fad36d" />
      </>
    ),
  },
  {
    id: 'paint',
    art: (
      <>
        <path d="M16 2c9 0 14 6 14 13 0 8-6 15-13 15-3 0-3-3-2-5s-1-4-4-3-9 1-9-6C2 8 8 2 16 2z" fill="#35a9e6" />
        <circle cx="10" cy="11" r="3" fill="#2d9a3c" />
        <circle cx="17" cy="7" r="2.700" fill="#f6b52b" />
        <circle cx="7" cy="17" r="2.600" fill="#d95c2b" />
        <path d="M21 11h7l-1 6h-4z" fill="#e8b98c" />
        <path d="M23.500 16h3v16h-3z" fill="#8a4b23" />
      </>
    ),
  },
  {
    id: 'copilot',
    art: (
      <>
        <path d="M9 2h11a4 4 0 0 1 4 3l1 4h-6c-3 0-4 2-5 5l-3 8H5c-4 0-4-4-3-7l3-9c1-3 2-4 4-4z" fill="#2b8fd0" />
        <path d="M4 10h10.500l-3.500 12H5c-4 0-4-4-3-7z" fill="#57b84a" />
        <path d="M1.500 17h11L11 22H5c-3 0-4-2-3.500-5z" fill="#f2c62e" />
        <path d="M15 2h5a4 4 0 0 1 4 3l1 4h-8z" fill="#1a4fc0" />
        <path d="M23 30H12a4 4 0 0 1-4-3l-1-4h6c3 0 4-2 5-5l3-8h6c4 0 4 4 3 7l-3 9c-1 3-2 4-4 4z" fill="#f0854f" />
        <path d="M21 10h6c4 0 4 4 3 7l-1 2H18z" fill="#a85ab8" />
        <path d="M8 23h6l-2 7a4 4 0 0 1-4-3z" fill="#e04a35" />
      </>
    ),
  },
  {
    id: 'telegram',
    art: (
      <>
        <circle cx="16" cy="16" r="13.500" fill="#2a9dd8" />
        <path d="M7 16l17-7-3 15-5-4-3 3-1-5 9-7-11 6z" fill="#fff" />
      </>
    ),
  },
  {
    id: 'git',
    art: (
      <>
        <path d="M16 1l7 7-4 5-7-6z" fill="#f0986a" />
        <path d="M8 9l7 7-7 7-7-7z" fill="#7ab0f5" />
        <path d="M24 9l7 7-7 7-7-7z" fill="#7cc957" />
        <path d="M16 17l7 7-7 7-7-7z" fill="#f8d07d" />
        <path d="M13 8l6 6v8M17 12l7 4" stroke="#f4f4f4" strokeWidth="1.800" fill="none" />
      </>
    ),
  },
];

const TaskIcon = ({ item }) => (
  <div
    className={`relative flex h-[49px] w-[45px] shrink-0 items-center justify-center rounded-[5px] ${
      item.active ? 'bg-[#eef3fb] shadow-[3px_0_0_#e1e9f7]' : ''
    }`}
  >
    <svg width="31" height="31" viewBox="0 0 32 32">{item.art}</svg>
    {item.badge && (
      <span className="absolute right-[1px] top-[3px] flex h-[19px] w-[19px] items-center justify-center rounded-full bg-[#0f7cc8] text-[13px] text-white">
        {item.badge}
      </span>
    )}
    {item.running && <span className="absolute bottom-0 h-[4px] w-[8px] rounded-full bg-[#85888e]" />}
    {item.active && <span className="absolute bottom-0 h-[4px] w-[20px] rounded-full bg-[#0f7bd6]" />}
  </div>
);

const Taskbar = () => (
  <div className="flex h-[60px] items-center border-t border-[#a9b4c4] bg-[linear-gradient(90deg,#e0ebf5_0%,#e1ecf6_22%,#d5e1f7_31%,#d8def0_40%,#d5e0f7_48%,#d6ddef_58%,#d4dff6_66%,#d8dcee_73%,#e0ebf6_80%,#e0ebf6_100%)]">
    <div className="relative ml-[25px] h-[44px] w-[44px]">
      <svg width="32" height="32" viewBox="0 0 32 32" className="mt-[9px]">
        <path d="M2 9l10-7 4 12H5z" fill="#f0a51e" />
        <path d="M8 30a7.500 7.500 0 0 1-1-14.500 9 9 0 0 1 16-1A8 8 0 0 1 24 30z" fill="#8dbdf0" />
        <path d="M8 30a7.500 7.500 0 0 1-5-3c6 1 18 1 26-2a8 8 0 0 1-5 5z" fill="#5a97dd" />
      </svg>
      <span className="absolute left-[11px] top-0 flex h-[20px] items-center rounded-full bg-[#f7fafd] px-[5px] text-[14px] tracking-[-0.04em] text-[#222]">66°</span>
    </div>
    <svg width="30" height="30" viewBox="0 0 30 30" className="ml-[198px]">
      <path d="M0 1a1 1 0 0 1 1-1h13v14H0z" fill="#3cb9ee" />
      <path d="M15.500 0H29a1 1 0 0 1 1 1v13H15.500z" fill="#1f9de4" />
      <path d="M0 15.500h14V30H1a1 1 0 0 1-1-1z" fill="#138ae0" />
      <path d="M15.500 15.500H30V29a1 1 0 0 1-1 1H15.500z" fill="#0a79d6" />
    </svg>
    {/* Search box */}
    <div className="ml-[18px] flex h-[39px] w-[273px] items-center rounded-full border border-[#c3cee0] bg-[#f4f8fe] pl-[13px] pr-[3px]">
      <svg width="20" height="20" viewBox="0 0 20 20" fill="none" stroke="#222" strokeWidth="2.200">
        <circle cx="8" cy="8" r="6.500" />
        <path d="M12.800 12.800l6 6" />
      </svg>
      <span className="ml-[11px] text-[17px] tracking-[-0.03em] text-[#555]">Search</span>
      <div className="ml-auto flex h-[33px] w-[65px] items-center justify-center rounded-full bg-[#e2e4ea]">
        <svg width="30" height="26" viewBox="0 0 30 26">
          <path d="M10 5V3a2 2 0 0 1 2-2h6a2 2 0 0 1 2 2v2" fill="none" stroke="#4a3a30" strokeWidth="2" />
          <rect x="0" y="13" width="30" height="11" rx="1.500" fill="#9a4a1a" />
          <rect x="0" y="4" width="30" height="11" rx="1.500" fill="#df8f17" />
          <rect x="12" y="12" width="6" height="6" rx="1" fill="#f7c331" />
        </svg>
      </div>
    </div>
    <div className="ml-[8px] flex gap-[9.95px]">
      {taskIcons.map((item) => (
        <TaskIcon key={item.id} item={item} />
      ))}
    </div>
    {/* System tray */}
    <div className="ml-auto flex items-center pr-[25px] text-[#222]">
      <Chevron d="M1 9.500l6-6 6 6" width={1.8} color="#222" />
      <svg width="21" height="16" viewBox="0 0 21 16" className="ml-[22px]">
        <path d="M5 15a4.800 4.800 0 0 1-.5-9.500 6.500 6.500 0 0 1 12-.5A5 5 0 0 1 16 15z" fill="#1068c4" />
        <path d="M5 15c-3 0-5-2-5-4.500l8-4L20 12c-.5 2-2 3-4 3z" fill="#2a9be8" />
      </svg>
      <span className="ml-[24px] w-[30px] text-[15px] tracking-[-0.05em]">ENG</span>
      <svg width="20" height="16" viewBox="0 0 20 16" fill="none" stroke="#222" strokeWidth="1.500" className="ml-[22px]">
        <path d="M1 6a13 13 0 0 1 18 0M4 9a8.500 8.500 0 0 1 12 0M6.800 11.800a4.500 4.500 0 0 1 6.400 0" />
        <circle cx="10" cy="14" r="1" fill="#222" />
      </svg>
      <svg width="20" height="16" viewBox="0 0 20 16" fill="none" stroke="#222" strokeWidth="1.300" className="ml-[10px]">
        <path d="M1 5.500h3l4-4v13l-4-4H1zM11 5.500a4 4 0 0 1 0 5M13.500 3a7 7 0 0 1 0 10" />
        <path d="M16 1a10 10 0 0 1 0 14" stroke="#aaa" />
      </svg>
      <svg width="20" height="14" viewBox="0 0 20 14" className="ml-[11px]">
        <rect x="0.800" y="1.500" width="15.500" height="11" rx="2.500" fill="none" stroke="#222" strokeWidth="1.400" />
        <rect x="3" y="3.700" width="9" height="6.600" fill="#222" />
        <path d="M18.500 5v4" stroke="#222" strokeWidth="2" />
      </svg>
      <div className="ml-[17px] w-[80px] -mt-[4px] text-right text-[15px] leading-[20px] tracking-[-0.015em]">
        <div>6:26 PM</div>
        <div>11/30/2024</div>
      </div>
      <svg width="18" height="20" viewBox="0 0 18 20" className="ml-[11px] overflow-visible font-['Open_Sans',sans-serif]">
        <path d="M1 15h1.500V8A6 6 0 0 1 10 2.500V9h5v6h1.500v1.500H1zM6 17.500h6a3 2 0 0 1-6 0z" fill="#111" />
        <text x="11.500" y="7" fontSize="10" fontWeight="700" fill="#111">z</text>
        <text x="6.500" y="13" fontSize="9" fontWeight="700" fill="#fff">z</text>
      </svg>
    </div>
  </div>
);

const App = () => {
  const [selected, setSelected] = useState('Orders');

  return (
    <div className="relative flex h-[1080px] w-[1920px] flex-col overflow-hidden bg-[#f3f2f1] font-['Open_Sans','Noto_Sans',sans-serif]">
      <TitleBar />
      <Tabs />
      <Ribbon />
      <div className="flex h-[822px] border-b border-[#c8c6c4]">
        <QueriesPane selected={selected} onSelect={setSelected} />
        <div className="flex min-w-0 flex-1 flex-col pl-[5px] pr-[6px] pt-[13px]">
          <FormulaBar />
          <Grid />
        </div>
        <SettingsPane name={selected} />
      </div>
      {/* Status bar */}
      <div className="flex h-[27px] items-center px-[6px] text-[14px] tracking-[-0.025em] text-[#444]">
        <span className="tracking-[-0.018em]">8 COLUMNS, 999+ ROWS</span>
        <span className="ml-[19px]">Column profiling based on top 1000 rows</span>
        <span className="ml-auto tracking-[-0.025em]">PREVIEW DOWNLOADED AT 6:26 PM</span>
      </div>
      <Taskbar />
      {/* Watermark lies over the grid and the taskbar */}
      <div className="pointer-events-none absolute left-[840px] top-[937px] flex w-[240px] flex-col items-center text-[#999] opacity-30">
        <div dir="rtl" className="scale-x-[0.775] whitespace-nowrap font-['DejaVu_Sans',sans-serif] text-[84px] font-bold leading-[84px]">مستقل</div>
        <div className="font-['Liberation_Sans',sans-serif] text-[37.500px] font-bold leading-[40px] -mt-[3px]">mostaql.com</div>
      </div>
    </div>
  );
};

export default App;
